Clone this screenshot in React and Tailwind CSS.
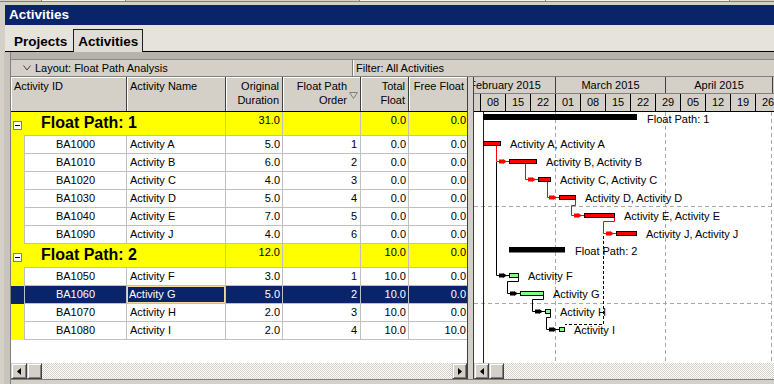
import React from 'react';

const rows = [
  { group: true, label: 'Float Path: 1', dur: '31.0', tf: '0.0', ff: '0.0' },
  { id: 'BA1000', name: 'Activity A', dur: '5.0', ord: '1', tf: '0.0', ff: '0.0' },
  { id: 'BA1010', name: 'Activity B', dur: '6.0', ord: '2', tf: '0.0', ff: '0.0' },
  { id: 'BA1020', name: 'Activity C', dur: '4.0', ord: '3', tf: '0.0', ff: '0.0' },
  { id: 'BA1030', name: 'Activity D', dur: '5.0', ord: '4', tf: '0.0', ff: '0.0' },
  { id: 'BA1040', name: 'Activity E', dur: '7.0', ord: '5', tf: '0.0', ff: '0.0' },
  { id: 'BA1090', name: 'Activity J', dur: '4.0', ord: '6', tf: '0.0', ff: '0.0' },
  { group: true, label: 'Float Path: 2', dur: '12.0', tf: '10.0', ff: '0.0' },
  { id: 'BA1050', name: 'Activity F', dur: '3.0', ord: '1', tf: '10.0', ff: '0.0' },
  { id: 'BA1060', name: 'Activity G', dur: '5.0', ord: '2', tf: '10.0', ff: '0.0', selected: true },
  { id: 'BA1070', name: 'Activity H', dur: '2.0', ord: '3', tf: '10.0', ff: '0.0' },
  { id: 'BA1080', name: 'Activity I', dur: '2.0', ord: '4', tf: '10.0', ff: '10.0' },
];

const days = ['08', '15', '22', '01', '08', '15', '22', '29', '05', '12', '19', '26'];

// win classic 3d button
const raised =
  'bg-[#d4d0c8] border border-t-[#d4d0c8] border-l-[#d4d0c8] border-r-[#404040] border-b-[#404040] shadow-[inset_1px_1px_0_#ffffff,inset_-1px_-1px_0_#808080]';
const hatch =
  'bg-[image:repeating-conic-gradient(#d4d0c8_0_25%,#ffffff_0_50%)] bg-[length:2px_2px]';

const Arrow = ({ left }) => (
  <svg width="4" height="7" viewBox="0 0 4 7">
    {left ? <polygon points="4,0 0,3.5 4,7" fill="#000" /> : <polygon points="0,0 4,3.5 0,7" fill="#000" />}
  </svg>
);

const ScrollBtn = ({ left, w }) => (
  <div className={`${raised} ${w} h-[16px] shrink-0 flex items-center justify-center`}>
    <Arrow left={left} />
  </div>
);

const GroupRow = ({ r }) => (
  <div className="flex h-[24px] shrink-0 bg-[#ffff00] text-black">
    <div className="w-[13px] shrink-0 pl-[2px] pt-[9px]">
      <div className="w-[9px] h-[9px] bg-white border border-[#808080] flex items-center justify-center">
        <div className="w-[5px] h-px bg-black" />
      </div>
    </div>
    <div className="flex flex-1 border-b border-[#c0c0c0] text-[11px] leading-[14px]">
      <div className="w-[202px] shrink-0 border-r border-[#c0c0c0] pl-[17px] text-[16px] font-bold leading-[22px]">
        {r.label}
      </div>
      <div className="w-[57px] shrink-0 border-r border-[#c0c0c0] text-right pr-[2px] pt-[1px]">{r.dur}</div>
      <div className="w-[78px] shrink-0 border-r border-[#c0c0c0]" />
      <div className="w-[48px] shrink-0 border-r border-[#c0c0c0] text-right pr-[2px] pt-[1px]">{r.tf}</div>
      <div className="w-[58px] shrink-0 text-right pr-[1px] pt-[1px]">{r.ff}</div>
    </div>
  </div>
);

const DataRow = ({ r }) => {
  const sel = r.selected;
  return (
    <div className={`flex h-[18px] shrink-0 text-[11px] leading-[17px] ${sel ? 'bg-[#0a246a] text-white' : 'bg-white text-black'}`}>
      <div className={`w-[13px] shrink-0 ${sel ? '' : 'bg-[#ffff00]'}`} />
      <div className="flex flex-1 border-b border-[#c0c0c0]">
        <div className="w-[103px] shrink-0 border-x border-[#c0c0c0] text-center">{r.id}</div>
        <div className="w-[99px] shrink-0 border-r border-[#c0c0c0]">
          {sel ? (
            <div className="h-full border border-[#f0d8a0] pl-[1px] leading-[15px]">{r.name}</div>
          ) : (
            <div className="pl-[3px]">{r.name}</div>
          )}
        </div>
        <div className="w-[57px] shrink-0 border-r border-[#c0c0c0] text-right pr-[2px]">{r.dur}</div>
        <div className="w-[78px] shrink-0 border-r border-[#c0c0c0] text-right pr-[3px]">{r.ord}</div>
        <div className="w-[48px] shrink-0 border-r border-[#c0c0c0] text-right pr-[2px]">{r.tf}</div>
        <div className="w-[58px] shrink-0 text-right pr-[1px]">{r.ff}</div>
      </div>
    </div>
  );
};

const Table = () => (
  <div className="w-[457px] shrink-0 flex flex-col border-r border-[#404040] bg-white">
    {/* column header */}
    <div className="flex h-[35px] shrink-0 bg-[#d4d0c8] border-b border-black text-[11px] leading-[14px] text-black">
      <div className="w-[116px] shrink-0 border-r border-[#404040] pl-[3px] pt-[2px] shadow-[inset_1px_1px_0_#ffffff]">Activity ID</div>
      <div className="w-[99px] shrink-0 border-r border-[#404040] pl-[3px] pt-[2px] shadow-[inset_1px_1px_0_#ffffff]">Activity Name</div>
      <div className="w-[57px] shrink-0 border-r border-[#404040] pr-[3px] pt-[2px] text-right shadow-[inset_1px_1px_0_#ffffff]">
        Original<br />Duration
      </div>
      <div className="w-[78px] shrink-0 border-r border-[#404040] pt-[2px] pr-[1px] flex justify-end shadow-[inset_1px_1px_0_#ffffff]">
        <div className="text-right">Float Path<br />Order</div>
        <svg width="10" height="7" viewBox="0 0 10 7" className="mt-[13px] ml-[2px]">
          <path d="M0.5 0.5 H8.5 L4.5 6.5 Z" fill="none" stroke="#808080" />
        </svg>
      </div>
      <div className="w-[48px] shrink-0 border-r border-[#404040] pr-[3px] pt-[2px] text-right shadow-[inset_1px_1px_0_#ffffff]">
        Total<br />Float
      </div>
      <div className="w-[58px] shrink-0 pr-[3px] pt-[2px] text-right shadow-[inset_1px_1px_0_#ffffff]">Free Float</div>
    </div>

    {rows.map((r, i) => (r.group ? <GroupRow key={i} r={r} /> : <DataRow key={i} r={r} />))}

    <div className="flex-1 bg-white" />

    {/* h scroll */}
    <div className="flex h-[16px] shrink-0">
      <ScrollBtn left w="w-[16px]" />
      <div className={`${raised} w-[15px] h-[16px] shrink-0`} />
      <div className={`flex-1 ${hatch}`} />
      <ScrollBtn w="w-[15px]" />
    </div>
  </div>
);

const GanttChart = () => {
  const red = '#ff0000';
  const green = '#80ff80';
  const bars = [
    { x1: 9, x2: 27, top: 24, fill: red, label: 'Activity A, Activity A' },
    { x1: 35, x2: 63, top: 42, fill: red, label: 'Activity B, Activity B' },
    { x1: 64, x2: 77, top: 60, fill: red, label: 'Activity C, Activity C' },
    { x1: 85, x2: 102, top: 78, fill: red, label: 'Activity D, Activity D' },
    { x1: 110, x2: 141, top: 96, fill: red, label: 'Activity E, Activity E' },
    { x1: 142, x2: 163, top: 114, fill: red, label: 'Activity J, Activity J' },
    { x1: 35, x2: 45, top: 156, fill: green, label: 'Activity F' },
    { x1: 46, x2: 70, top: 174, fill: green, label: 'Activity G' },
    { x1: 71, x2: 77, top: 192, fill: green, label: 'Activity H' },
    { x1: 85, x2: 91, top: 210, fill: green, label: 'Activity I' },
  ];
  const links = [
    { c: red, pts: '22.5,34 22.5,49.5 35,49.5', bx: 35, cy: 49.5 },
    { c: red, pts: '51.5,52 51.5,67.5 64,67.5', bx: 64, cy: 67.5 },
    { c: red, pts: '73.5,70 73.5,85.5 85,85.5', bx: 85, cy: 85.5 },
    { c: red, pts: '101.5,88 101.5,93.5 97.5,93.5 97.5,103.5 110,103.5', bx: 110, cy: 103.5 },
    { c: red, pts: '140.5,106 140.5,109.5 129.5,109.5 129.5,121.5 142,121.5', bx: 142, cy: 121.5 },
    { c: '#000', pts: '22.5,50 22.5,163.5 35,163.5', bx: 35, cy: 163.5 },
    { c: '#000', pts: '44.5,166 44.5,169.5 33.5,169.5 33.5,181.5 46,181.5', bx: 46, cy: 181.5 },
    { c: '#000', pts: '69.5,184 69.5,187.5 58.5,187.5 58.5,199.5 71,199.5', bx: 71, cy: 199.5 },
    { c: '#000', pts: '76.5,202 76.5,205.5 72.5,205.5 72.5,217.5 85,217.5', bx: 85, cy: 217.5 },
  ];
  const head = (bx, cy) =>
    `${bx - 10},${cy - 2} ${bx - 6},${cy - 2} ${bx - 6},${cy - 2.5} ${bx - 2},${cy} ${bx - 6},${cy + 2.5} ${bx - 6},${cy + 2} ${bx - 10},${cy + 2}`;

  return (
    <svg width="300" height="251" viewBox="0 0 300 251" className="block bg-white" fontSize="11">
      {/* grid */}
      <g stroke="#a8a8a8" strokeDasharray="4 3">
        <line x1="81.5" y1="0" x2="81.5" y2="251" />
        <line x1="191.5" y1="0" x2="191.5" y2="251" />
        <line x1="297.5" y1="0" x2="297.5" y2="251" />
        <line x1="0" y1="94.5" x2="300" y2="94.5" />
        <line x1="0" y1="191.5" x2="300" y2="191.5" />
      </g>
      <line x1="9.5" y1="0" x2="9.5" y2="251" stroke="#0000ff" />

      {/* float path summary bars */}
      <rect x="9" y="2" width="154" height="6" fill="#000" />
      <text x="173" y="6.5" dominantBaseline="central" fill="#000">Float Path: 1</text>
      <rect x="35" y="135" width="56" height="5.5" fill="#000" />
      <text x="101" y="138.5" dominantBaseline="central" fill="#000">Float Path: 2</text>

      {/* links */}
      {links.map((l, i) => (
        <g key={i}>
          <polyline points={l.pts} fill="none" stroke={l.c} />
          <polygon points={head(l.bx, l.cy)} fill={l.c} />
        </g>
      ))}
      <polyline points="129.5,124 129.5,212.5 91,212.5" fill="none" stroke="#000" strokeDasharray="3 2" />

      {/* activity bars */}
      {bars.map((b, i) => (
        <g key={i}>
          <rect x={b.x1 + 0.5} y={b.top + 5.5} width={b.x2 - b.x1 - 1} height="4" fill={b.fill} stroke="#000" />
          <text x={b.x2 + 9} y={b.top + 7.5} dominantBaseline="central" fill="#000">{b.label}</text>
        </g>
      ))}
    </svg>
  );
};

const Gantt = () => (
  <div className="w-[301px] shrink-0 flex flex-col border-l border-[#404040] bg-white overflow-hidden">
    <div className="h-[35px] shrink-0 bg-[#d4d0c8] text-[11px] text-black">
      <div className="flex h-[17px] border-b border-[#808080] leading-[16px] whitespace-nowrap">
        <div className="w-[101px] shrink-0 -ml-[19px] border-r border-[#404040] text-center">February 2015</div>
        <div className="w-[110px] shrink-0 border-r border-[#404040] text-center">March 2015</div>
        <div className="w-[107px] shrink-0 border-r border-[#404040] text-center">April 2015</div>
        <div className="w-[60px] shrink-0" />
      </div>
      <div className="flex h-[18px] border-b border-black leading-[17px]">
        <div className="w-[7px] shrink-0 border-r border-black" />
        {days.map((d, i) => (
          <div key={i} className="w-[25px] shrink-0 border-r border-black text-center">{d}</div>
        ))}
      </div>
    </div>
    <GanttChart />
    <div className="flex h-[16px] shrink-0">
      <ScrollBtn left w="w-[15px]" />
      <div className={`${raised} w-[15px] h-[16px] shrink-0`} />
      <div className={`flex-1 ${hatch}`} />
    </div>
  </div>
);

export default function App() {
  return (
    <div className="w-[774px] h-[384px] overflow-hidden bg-[#d4d0c8] font-['Liberation_Sans',Arial,sans-serif] text-black">
      {/* strip of the window above */}
      <div className="h-[5px] flex">
        <div className="w-[42px] h-[2px] border-b border-r border-[#808080]" />
        <div className="w-[84px] h-[2px] border-b border-r border-[#808080] bg-[#f4f3ef]" />
        <div className="w-[234px] h-[2px] border-b border-r border-[#808080]" />
        <div className="w-[186px] h-[2px] border-b border-r border-[#808080] bg-[#f4f3ef]" />
        <div className="w-[184px] h-[2px] border-b border-r border-[#808080] bg-[#f4f3ef]" />
        <div className="flex-1 h-[2px] border-b border-[#808080]" />
      </div>

      <div className="flex">
        <div className="w-[5px] shrink-0" />
        <div className="flex-1 flex flex-col">
          <div className="h-[20px] bg-[#0a246a] text-white font-bold text-[13.5px] leading-[20px] pl-[4px]">Activities</div>
          <div className="h-[27px] bg-[#e6e3dd] border-b border-black flex items-end font-bold text-[13.5px]">
            <div className="ml-[9px] h-[22px] pt-[3px] leading-[20px]">Projects</div>
            <div className="ml-[6px] h-[23px] -mb-px border-x border-t border-[#202020] bg-[#e0ddd6] px-[4px] pt-[2px] leading-[20px]">
              Activities
            </div>
          </div>
        </div>
      </div>

      <div className="flex h-[332px]">
        <div className="w-[11px] shrink-0 bg-[#c8c4bc] border-l-[4px] border-l-[#d4d0c8] border-r border-r-[#808080]" />
        <div className="flex-1 flex flex-col">
          <div className="h-[8px] shrink-0 bg-[#b6b3ac] border-b border-[#8a8885]" />
          <div className="h-[17px] shrink-0 flex bg-[#d4d0c8] border-b border-[#808080] text-[11px] leading-[16px]">
            <div className="w-[342px] shrink-0 flex items-center border-r border-[#808080] pl-[12px]">
              <svg width="8" height="6" viewBox="0 0 8 6">
                <path d="M0.5 0.5 L4 5 L7.5 0.5" fill="none" stroke="#404040" />
              </svg>
              <span className="ml-[4px]">Layout: Float Path Analysis</span>
            </div>
            <div className="pl-[2px] border-l border-white">Filter: All Activities</div>
          </div>
          <div className="flex h-[302px] shrink-0">
            <Table />
            <div className="w-[5px] shrink-0 bg-[#d4d0c8]" />
            <Gantt />
          </div>
          <div className="flex-1 border-t border-[#808080] bg-[#d4d0c8]" />
        </div>
      </div>
    </div>
  );
}
